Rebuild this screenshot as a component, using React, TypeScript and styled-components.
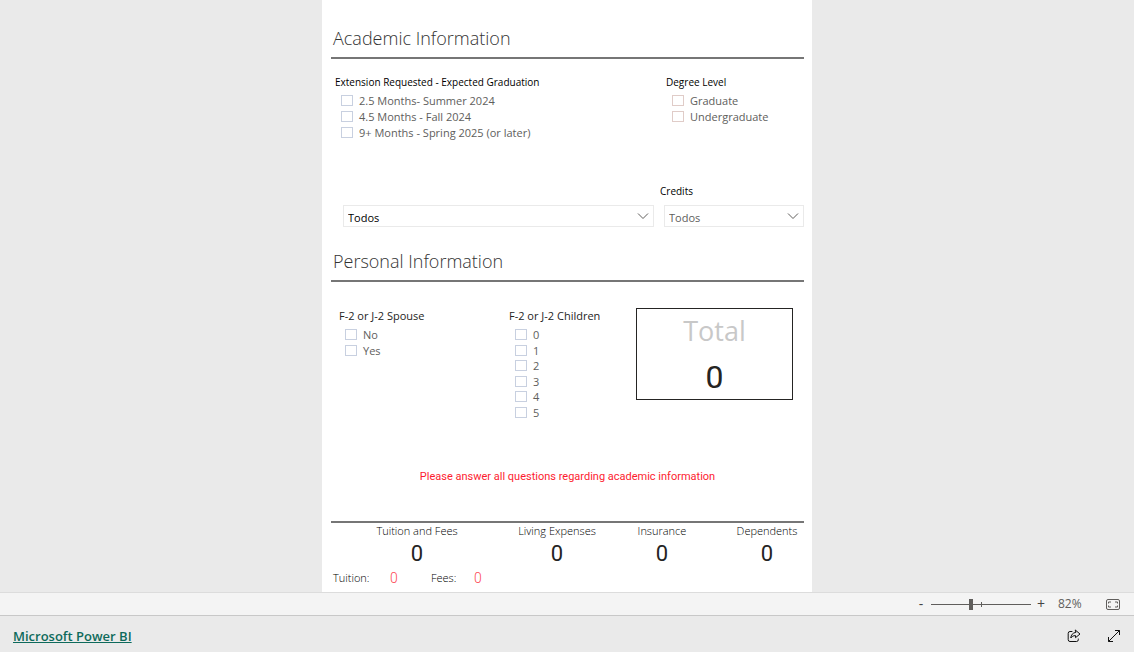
import React, { useId, useState } from "react";
import styled, { createGlobalStyle } from "styled-components";

const sans = `"Open Sans", "Noto Sans", sans-serif`;
const din = `Roboto, "Liberation Sans", sans-serif`;

const GlobalStyle = createGlobalStyle`
  * { box-sizing: border-box; }
  body { margin: 0; background: #eaeaea; font-family: ${sans}; font-size: 11px; line-height: 16px; color: #252423; }
  h2, p, dl, dd, dt, fieldset, legend { margin: 0; padding: 0; border: 0; font-weight: 400; }
`;

const Page = styled.div`
  display: flex;
  flex-direction: column;
  min-height: 100vh;
`;

const Stage = styled.main`
  flex: 1;
  display: flex;
  justify-content: center;
`;

const Report = styled.div`
  width: 100%;
  max-width: 490px;
  padding: 24px 8px 4px 9px;
  background: #fff;
`;

const SectionTitle = styled.h2`
  padding: 0 2px 5px;
  border-bottom: 2px solid #767676;
  font-size: 18px;
  line-height: 28px;
  font-weight: 300;
  color: #333;
`;

const AcademicGrid = styled.div`
  display: grid;
  grid-template-columns: 331px 1fr;
  height: 110px;
  padding: 15px 0 0 4px;
`;

const FilterRow = styled.div`
  display: grid;
  grid-template-columns: 311px 1fr;
  column-gap: 10px;
  align-items: end;
  padding: 14px 0 20px 12px;
`;

const PersonalGrid = styled.div`
  display: grid;
  grid-template-columns: 170px 127px 157px;
  height: 187px;
  padding: 26px 0 0 8px;
`;

const Group = styled.fieldset`
  min-width: 0;
`;

const GroupTitle = styled.legend<{ $small?: boolean; $color?: string }>`
  height: 19px;
  font-size: ${(p) => (p.$small ? 10 : 11)}px;
  white-space: nowrap;
  color: ${(p) => p.$color ?? "#000"};
`;

const OptionList = styled.div<{ $height: number }>`
  display: grid;
  grid-auto-rows: 1fr;
  height: ${(p) => p.$height}px;
  padding-left: 6px;
`;

const Option = styled.label`
  display: flex;
  align-items: center;
  gap: 6px;
  line-height: 15px;
  color: #605e5c;
  white-space: nowrap;
`;

const Tick = styled.input<{ $edge: string }>`
  appearance: none;
  flex: none;
  width: 12px;
  height: 11px;
  margin: 0;
  border: 1px solid ${(p) => p.$edge};
  background: #fff;
  &:checked { background: #605e5c; }
`;

const Field = styled.div`
  display: flex;
  flex-direction: column;
  gap: 6px;
`;

const FieldLabel = styled.label`
  margin-left: -4px;
  font-size: 10px;
  color: #000;
`;

const SelectBox = styled.div`
  display: grid;
  align-items: center;
  height: 22px;
  border: 1px solid #eaeaea;
  > * { grid-area: 1 / 1; }
  > svg { justify-self: end; margin-right: 3px; pointer-events: none; }
`;

const Select = styled.select<{ $color: string }>`
  appearance: none;
  width: 100%;
  height: 20px;
  padding: 2px 20px 0 4px;
  border: 0;
  background: transparent;
  font-family: ${sans};
  font-size: 11px;
  color: ${(p) => p.$color};
`;

const TotalCard = styled.div`
  display: flex;
  flex-direction: column;
  align-items: center;
  height: 92px;
  border: 1px solid #252423;
`;

const TotalLabel = styled.span`
  font-size: 27px;
  line-height: 44px;
  color: #c8c8c8;
`;

const TotalValue = styled.output`
  font-family: ${din};
  font-size: 32px;
  line-height: 48px;
`;

const Notice = styled.p`
  height: 52px;
  font-family: ${din};
  font-size: 11px;
  text-align: center;
  color: #fd1c2f;
`;

const Summary = styled.dl`
  display: grid;
  grid-template-columns: 172px 108px 102px 1fr;
  border-top: 2px solid #767676;
  > :last-child { padding-left: 17px; }
`;

const SummaryItem = styled.div`
  display: flex;
  flex-direction: column;
  align-items: center;
  line-height: 15px;
  font-size: 11px;
  white-space: nowrap;
`;

const SummaryLabel = styled.dt`
  && { font-weight: 300; }
  color: #000;
`;

const SummaryValue = styled.dd`
  font-family: ${din};
  font-size: 22px;
  line-height: 32px;
`;

const Breakdown = styled.dl`
  display: grid;
  grid-template-columns: 57px 41px 43px 1fr;
  padding-left: 2px;
`;

const BreakdownLabel = styled.dt`
  && { font-weight: 300; }
  color: #000;
`;

const BreakdownValue = styled.dd`
  && { font-weight: 300; }
  font-family: ${din};
  font-size: 14px;
  color: #fd4b55;
`;

const ZoomBar = styled.div`
  display: flex;
  align-items: center;
  justify-content: flex-end;
  height: 24px;
  padding-right: 14px;
  border-top: 1px solid #dcdcdc;
  border-bottom: 1px solid #c8c8c8;
  background: #f4f4f4;
`;

const ZoomButton = styled.button`
  width: 20px;
  height: 20px;
  padding: 0;
  border: 0;
  background: none;
  font-family: ${sans};
  font-size: 14px;
  line-height: 20px;
  color: #444;
`;

const ZoomSlider = styled.input`
  appearance: none;
  width: 100px;
  height: 11px;
  margin: 0;
  background:
    linear-gradient(#605e5c, #605e5c) 50px center / 1px 5px no-repeat,
    linear-gradient(#605e5c, #605e5c) center / 100% 1px no-repeat;
  &::-webkit-slider-thumb { appearance: none; width: 4px; height: 11px; background: #605e5c; }
`;

const ZoomLevel = styled.span`
  width: 55px;
  padding-left: 7px;
  font-size: 12px;
  color: #605e5c;
`;

const IconButton = styled.button`
  display: flex;
  padding: 0;
  border: 0;
  background: none;
`;

const Footer = styled.footer`
  display: flex;
  align-items: center;
  justify-content: space-between;
  height: 36px;
  padding: 4px 13px 0;
`;

const BrandLink = styled.a`
  font-size: 13px;
  line-height: 18px;
  font-weight: 600;
  color: #0e6a5b;
`;

const FooterActions = styled.div`
  display: flex;
  gap: 26px;
`;

const Chevron = () => (
  <svg width="14" height="10" viewBox="0 0 14 10" fill="none" stroke="#605e5c" aria-hidden="true">
    <path d="M2 2.5 7 7.5 12 2.5" />
  </svg>
);

interface ChecklistProps {
  title: string;
  items: string[];
  height: number;
  small?: boolean;
  titleColor?: string;
  edge?: string;
}

function Checklist({ title, items, height, small, titleColor, edge = "#c8d0e0" }: ChecklistProps) {
  return (
    <Group>
      <GroupTitle $small={small} $color={titleColor}>{title}</GroupTitle>
      <OptionList $height={height}>
        {items.map((item) => (
          <Option key={item}>
            <Tick type="checkbox" $edge={edge} />
            {item}
          </Option>
        ))}
      </OptionList>
    </Group>
  );
}

const summary = ["Tuition and Fees", "Living Expenses", "Insurance", "Dependents"];

export default function App() {
  const creditsId = useId();
  const [zoom, setZoom] = useState(82);
  const change = (value: number) => setZoom(Math.max(10, Math.min(190, value)));

  return (
    <Page>
      <GlobalStyle />
      <Stage>
        <Report>
          <SectionTitle>Academic Information</SectionTitle>
          <AcademicGrid>
            <Checklist
              title="Extension Requested - Expected Graduation"
              items={["2.5 Months- Summer 2024", "4.5 Months - Fall 2024", "9+ Months - Spring 2025 (or later)"]}
              height={47}
              small
            />
            <Checklist title="Degree Level" items={["Graduate", "Undergraduate"]} height={31} small edge="#e0ccc8" />
          </AcademicGrid>
          <FilterRow>
            <SelectBox>
              <Select $color="#000" aria-label="Program"><option>Todos</option></Select>
              <Chevron />
            </SelectBox>
            <Field>
              <FieldLabel htmlFor={creditsId}>Credits</FieldLabel>
              <SelectBox>
                <Select $color="#605e5c" id={creditsId}><option>Todos</option></Select>
                <Chevron />
              </SelectBox>
            </Field>
          </FilterRow>

          <SectionTitle>Personal Information</SectionTitle>
          <PersonalGrid>
            <Checklist title="F-2 or J-2 Spouse" items={["No", "Yes"]} height={31} titleColor="#252423" />
            <Checklist title="F-2 or J-2 Children" items={["0", "1", "2", "3", "4", "5"]} height={93} titleColor="#252423" />
            <TotalCard>
              <TotalLabel>Total</TotalLabel>
              <TotalValue>0</TotalValue>
            </TotalCard>
          </PersonalGrid>

          <Notice>Please answer all questions regarding academic information</Notice>

          <Summary>
            {summary.map((label) => (
              <SummaryItem key={label}>
                <SummaryLabel>{label}</SummaryLabel>
                <SummaryValue>0</SummaryValue>
              </SummaryItem>
            ))}
          </Summary>
          <Breakdown>
            <BreakdownLabel>Tuition:</BreakdownLabel>
            <BreakdownValue>0</BreakdownValue>
            <BreakdownLabel>Fees:</BreakdownLabel>
            <BreakdownValue>0</BreakdownValue>
          </Breakdown>
        </Report>
      </Stage>

      <ZoomBar>
        <ZoomButton aria-label="Zoom out" onClick={() => change(zoom - 10)}>-</ZoomButton>
        <ZoomSlider
          type="range"
          aria-label="Zoom"
          min={10}
          max={190}
          value={zoom}
          onChange={(e) => change(Number(e.target.value))}
        />
        <ZoomButton aria-label="Zoom in" onClick={() => change(zoom + 10)}>+</ZoomButton>
        <ZoomLevel>{zoom}%</ZoomLevel>
        <IconButton aria-label="Fit to page">
          <svg width="14" height="11" viewBox="0 0 14 11" fill="none" stroke="#605e5c">
            <rect x=".5" y=".5" width="13" height="10" rx="1.5" />
            <path d="M5 3H2.5V4.5M2.5 6.5V8H5M9 3H11.5V4.5M11.5 6.5V8H9" />
          </svg>
        </IconButton>
      </ZoomBar>

      <Footer>
        <BrandLink href="#">Microsoft Power BI</BrandLink>
        <FooterActions>
          <IconButton aria-label="Share">
            <svg width="14" height="14" viewBox="0 0 14 14" fill="none" stroke="#111" strokeLinejoin="round" strokeLinecap="round">
              <path d="M5 2.5H3A1.8 1.8 0 0 0 1.2 4.3V10.7A1.8 1.8 0 0 0 3 12.5H9.5A1.8 1.8 0 0 0 11.3 10.7V10" />
              <path d="M8.5 1.2 13 5 8.5 8.7V6.6C6.3 6.6 5 7.4 3.8 9 4 6 5.7 3.8 8.5 3.4Z" />
            </svg>
          </IconButton>
          <IconButton aria-label="Full screen">
            <svg width="14" height="14" viewBox="0 0 14 14" fill="none" stroke="#111">
              <path d="M1.5 12.5 12.5 1.5M8 1.5H12.5V6M1.5 8V12.5H6" />
            </svg>
          </IconButton>
        </FooterActions>
      </Footer>
    </Page>
  );
}
